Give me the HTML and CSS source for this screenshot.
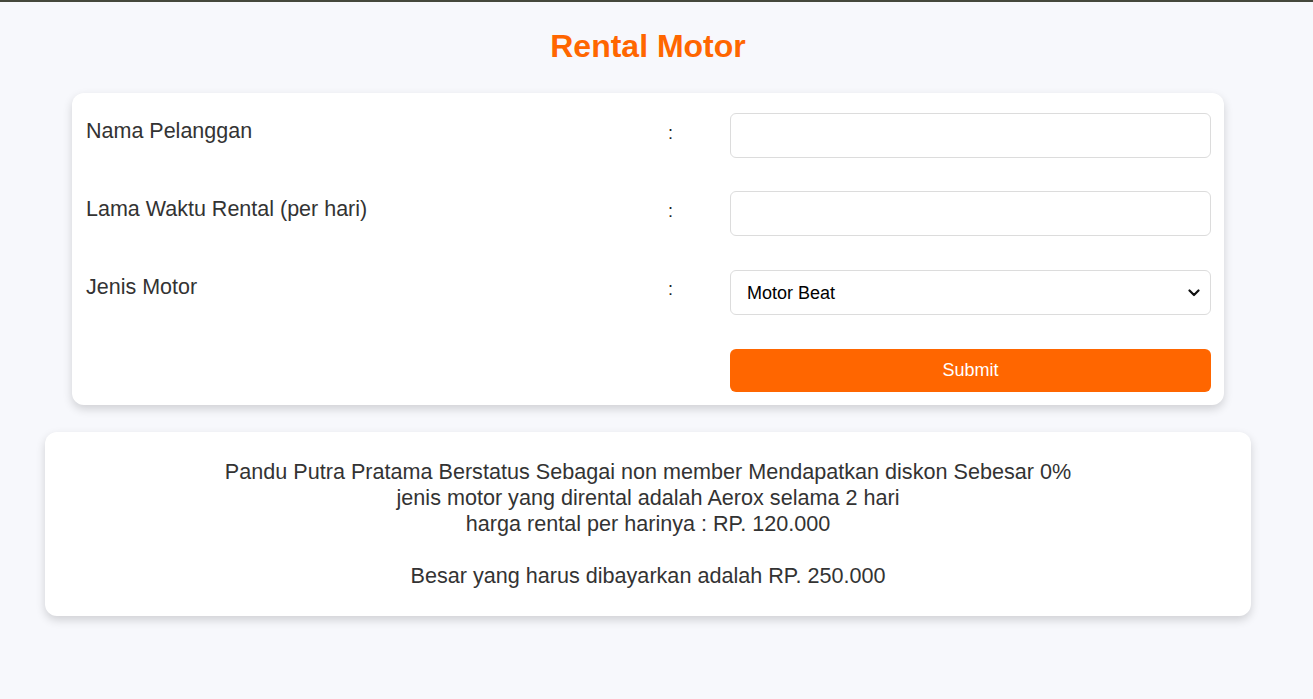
FILE: index.html
```html
<!DOCTYPE html>
<html lang="id">
<head>
<meta charset="utf-8">
<title>Rental Motor</title>
<link rel="stylesheet" href="styles.css">
</head>
<body>
<div class="page">
  <h1 class="title">Rental Motor</h1>
  <form class="card form-card">
    <div class="form-grid">
      <label class="label" for="nama">Nama Pelanggan</label>
      <span class="colon">:</span>
      <input class="field" id="nama" type="text">

      <label class="label" for="lama">Lama Waktu Rental (per hari)</label>
      <span class="colon">:</span>
      <input class="field" id="lama" type="text">

      <label class="label" for="jenis">Jenis Motor</label>
      <span class="colon">:</span>
      <div class="select-wrap">
        <select class="field select" id="jenis">
          <option>Motor Beat</option>
          <option>Aerox</option>
          <option>Vario</option>
        </select>
        <svg class="chevron" width="12" height="8" viewBox="0 0 12 8" aria-hidden="true">
          <polyline points="1.5,1.5 6,6 10.5,1.5" fill="none" stroke="#111" stroke-width="2.2" stroke-linecap="round" stroke-linejoin="round"/>
        </svg>
      </div>

      <span class="spacer"></span>
      <span class="spacer"></span>
      <button class="submit" type="button">Submit</button>
    </div>
  </form>
  <div class="card result-card">
    Pandu Putra Pratama Berstatus Sebagai non member Mendapatkan diskon Sebesar 0%<br>
    jenis motor yang dirental adalah Aerox selama 2 hari<br>
    harga rental per harinya : RP. 120.000<br>
    <br>
    Besar yang harus dibayarkan adalah RP. 250.000
  </div>
</div>
</body>
</html>
```
FILE: styles.css
```css
html, body {
  margin: 0;
  padding: 0;
}
body {
  background: #f7f8fc;
  border-top: 2px solid #45483c;
  font-family: "Liberation Sans", Arial, sans-serif;
  color: #333;
}
.page {
  width: 1296px;
  padding-bottom: 40px;
}
.title {
  margin: 26px 0 28px;
  text-align: center;
  color: #ff6600;
  font-size: 32px;
  font-weight: bold;
  line-height: 37px;
}
.card {
  background: #fff;
  border-radius: 12px;
  box-shadow: 0 4px 10px rgba(0, 0, 0, 0.16);
}
.form-card {
  width: 1152px;
  box-sizing: border-box;
  margin: 0 auto;
  padding: 20px 13px 13px 14px;
}
.form-grid {
  display: grid;
  grid-template-columns: 582px 62px 481px;
  row-gap: 33px;
}
.label {
  font-size: 21.5px;
  line-height: 25px;
  padding-top: 6px;
  color: #333;
}
.colon {
  font-size: 18px;
  line-height: 18px;
  padding-top: 11px;
  color: #222;
}
.field {
  box-sizing: border-box;
  display: block;
  height: 45px;
  width: 100%;
  border: 1px solid #dcdcdc;
  border-radius: 6px;
  background: #fff;
  padding: 0 16px;
  font-family: "Liberation Sans", Arial, sans-serif;
  font-size: 18px;
  color: #000;
  margin: 0;
}
.select-wrap {
  position: relative;
  margin-top: 1px;
}
.select {
  appearance: none;
  -webkit-appearance: none;
  padding-right: 36px;
}
.chevron {
  position: absolute;
  right: 11px;
  top: 19px;
  pointer-events: none;
}
.submit {
  display: block;
  margin-top: 1px;
  height: 43px;
  width: 100%;
  border: none;
  border-radius: 6px;
  background: #ff6600;
  color: #fff;
  font-family: "Liberation Sans", Arial, sans-serif;
  font-size: 18px;
}
.result-card {
  width: 1206px;
  box-sizing: border-box;
  margin: 27px auto 0;
  padding: 27px 20px 27px;
  text-align: center;
  font-size: 21.6px;
  line-height: 26px;
  color: #333;
}
```
